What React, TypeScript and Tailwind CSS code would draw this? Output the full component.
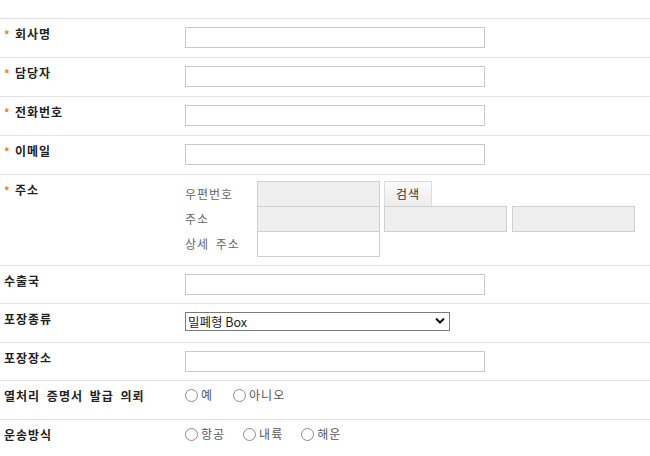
import React from "react";

const font = { fontFamily: '"Noto Sans CJK KR", "Noto Sans", sans-serif' };

function Label({ text, required }: { text: string; required?: boolean }) {
  return (
    <div className="w-[185px] shrink-0 pt-[7px] pl-[4px] flex items-start">
      {required && <span className="w-[11px] text-[11px] leading-[16px] font-bold text-[#f07a1c]">*</span>}
      <span className="text-[12px] leading-[16px] font-bold text-[#222] tracking-[1px] [word-spacing:3px]">{text}</span>
    </div>
  );
}

function Row({ h, children }: { h: string; children: React.ReactNode }) {
  return <div className={`flex border-b border-[#e2e2e2] ${h}`}>{children}</div>;
}

function TextBox({ w = "w-[300px]" }: { w?: string }) {
  return <div className={`${w} h-[21px] mt-[8px] border border-[#c9c9c9] bg-white`} />;
}

function Radio({ label, mr }: { label: string; mr: string }) {
  return (
    <label className={`flex items-center ${mr}`}>
      <span className="w-[13px] h-[13px] rounded-full border border-[#8c8c8c] bg-white" />
      <span className="ml-[3px] text-[12px] leading-[16px] text-[#555] tracking-[1px]">{label}</span>
    </label>
  );
}

const grayBox = "w-[123px] h-[26px] border border-[#cfcfcf] bg-[#efefef]";

export default function App() {
  return (
    <div className="w-[650px] h-[456px] bg-white overflow-hidden" style={font}>
      <div className="h-[19px] border-b border-[#e2e2e2]" />

      <Row h="h-[39px]">
        <Label text="회사명" required />
        <TextBox />
      </Row>
      <Row h="h-[39px]">
        <Label text="담당자" required />
        <TextBox />
      </Row>
      <Row h="h-[39px]">
        <Label text="전화번호" required />
        <TextBox />
      </Row>
      <Row h="h-[39px]">
        <Label text="이메일" required />
        <TextBox />
      </Row>

      <Row h="h-[91px]">
        <Label text="주소" required />
        <div className="pt-[6px] flex flex-col text-[12px] text-[#666] tracking-[1px] [word-spacing:3px]">
          <div className="flex items-center">
            <span className="w-[72px]">우편번호</span>
            <div className={grayBox} />
            <button className="ml-[4px] w-[48px] h-[26px] border border-[#dcdcdc] border-b-[#bdbdbd] bg-gradient-to-b from-[#fafafa] to-[#ececec] text-[12px] text-[#333]">
              검색
            </button>
          </div>
          <div className="flex items-center -mt-px">
            <span className="w-[72px]">주소</span>
            <div className={grayBox} />
            <div className={`${grayBox} ml-[4px]`} />
            <div className={`${grayBox} ml-[5px]`} />
          </div>
          <div className="flex items-center -mt-px">
            <span className="w-[72px]">상세 주소</span>
            <div className="w-[123px] h-[26px] border border-[#cfcfcf] bg-white" />
          </div>
        </div>
      </Row>

      <Row h="h-[38px]">
        <Label text="수출국" />
        <TextBox />
      </Row>
      <Row h="h-[39px]">
        <Label text="포장종류" />
        <div className="relative mt-[8px] w-[265px] h-[19px]">
          <select
            className="block appearance-none w-full h-full border border-[#7a7a7a] bg-white pl-[2px] text-[12.5px] leading-[17px] text-[#222] outline-none"
            defaultValue="box"
          >
            <option value="box">밀폐형 Box</option>
          </select>
          <svg className="absolute right-[5px] top-[5px] pointer-events-none" width="10" height="8" viewBox="0 0 10 8">
            <path d="M1 1.5 L5 5.5 L9 1.5" fill="none" stroke="#111" strokeWidth="2" />
          </svg>
        </div>
      </Row>
      <Row h="h-[38px]">
        <Label text="포장장소" />
        <TextBox />
      </Row>
      <Row h="h-[39px]">
        <Label text="열처리 증명서 발급 의뢰" />
        <div className="flex items-center h-[28px]">
          <Radio label="예" mr="mr-[20px]" />
          <Radio label="아니오" mr="" />
        </div>
      </Row>
      <div className="flex h-[40px]">
        <Label text="운송방식" />
        <div className="flex items-center h-[28px]">
          <Radio label="항공" mr="mr-[18px]" />
          <Radio label="내륙" mr="mr-[18px]" />
          <Radio label="해운" mr="" />
        </div>
      </div>
    </div>
  );
}
